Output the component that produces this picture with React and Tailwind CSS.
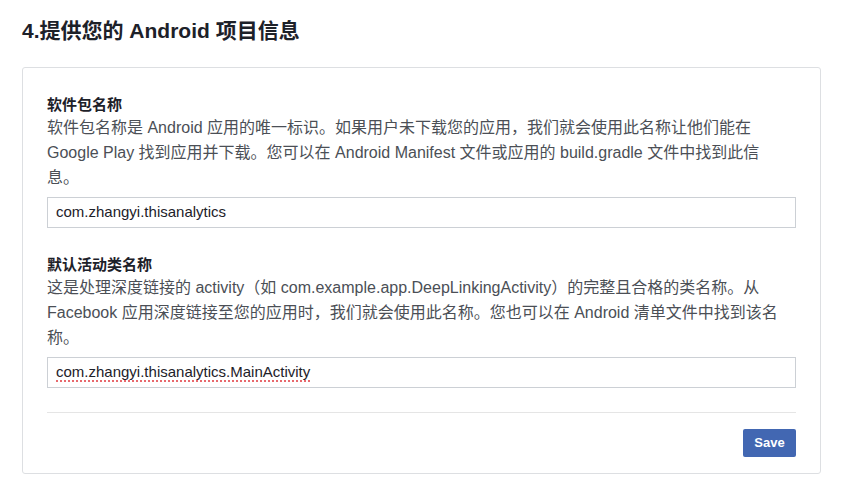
export default function App() {
  const cjk = { fontFamily: '"Liberation Sans", "Noto Sans CJK SC", sans-serif' };
  return (
    <div className="w-[841px] h-[492px] bg-white overflow-hidden" style={cjk}>
      <div className="pl-[22px] pr-[20px] pt-[18px]">
        <h1 className="text-[21px] leading-[26px] font-bold text-[#1d2129]">4.提供您的 Android 项目信息</h1>
        <div className="mt-[23px] border border-[#dddfe2] rounded-[3px] pt-[26px] pb-[16px] px-[24px]">
          <div className="text-[15px] leading-[21px] font-bold text-[#1d2129]">软件包名称</div>
          <p className="text-[16px] leading-[25px] text-[#4b4f56] whitespace-nowrap">
            软件包名称是 Android 应用的唯一标识。如果用户未下载您的应用，我们就会使用此名称让他们能在<br />
            Google Play 找到应用并下载。您可以在 Android Manifest 文件或应用的 build.gradle 文件中找到此信<br />
            息。
          </p>
          <div className="mt-[7px] h-[31px] border border-[#ccd0d5] flex items-center px-[8px] text-[15px] text-[#1d2129]">
            com.zhangyi.thisanalytics
          </div>
          <div className="mt-[26px] text-[15px] leading-[21px] font-bold text-[#1d2129]">默认活动类名称</div>
          <p className="text-[16px] leading-[25px] text-[#4b4f56] whitespace-nowrap">
            这是处理深度链接的 activity（如 com.example.app.DeepLinkingActivity）的完整且合格的类名称。从<br />
            Facebook 应用深度链接至您的应用时，我们就会使用此名称。您也可以在 Android 清单文件中找到该名<br />
            称。
          </p>
          <div className="mt-[7px] h-[31px] border border-[#ccd0d5] flex items-center px-[8px] text-[15px] text-[#1d2129]">
            <span className="underline decoration-dotted decoration-[#e0393e] underline-offset-[3px]">com.zhangyi.thisanalytics.MainActivity</span>
          </div>
          <div className="mt-[24px] border-t border-[#e5e5e5]"></div>
          <div className="mt-[16px] flex justify-end">
            <button className="h-[28px] w-[53px] rounded-[2px] bg-[#4267b2] text-white text-[13px] font-bold">Save</button>
          </div>
        </div>
      </div>
    </div>
  );
}
